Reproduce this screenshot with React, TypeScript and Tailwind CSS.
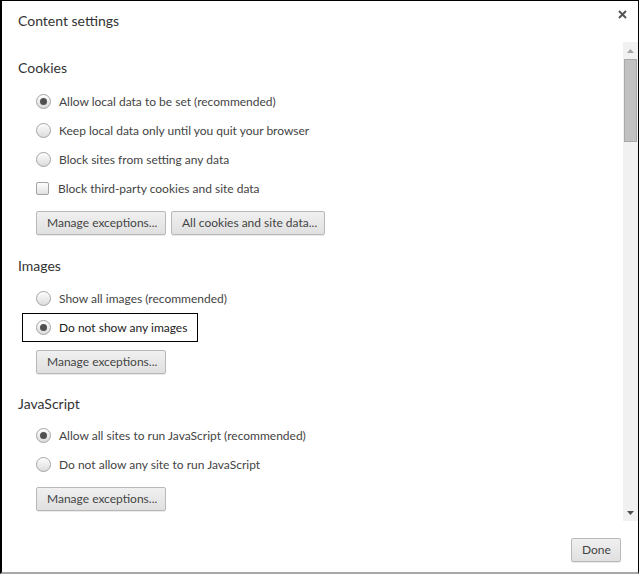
const font = "font-['Lato','Noto_Sans',sans-serif]";

function Radio({ checked }: { checked?: boolean }) {
  return (
    <span className="flex size-[15px] shrink-0 items-center justify-center rounded-full border border-[#a3a3a3] bg-gradient-to-b from-[#fdfdfd] to-[#dcdcdc] shadow-[inset_0_1px_0_#fff]">
      {checked && <span className="size-[7px] rounded-full bg-[#505050]" />}
    </span>
  );
}

function Checkbox() {
  return (
    <span className="size-[13px] shrink-0 rounded-[2px] border border-[#a3a3a3] bg-gradient-to-b from-[#fdfdfd] to-[#e2e2e2]" />
  );
}

function Option({
  label,
  checked,
  kind = "radio",
  focused,
}: {
  label: string;
  checked?: boolean;
  kind?: "radio" | "checkbox";
  focused?: boolean;
}) {
  if (focused) {
    return (
      <div className="flex h-[29px]">
        <div className="ml-[4px] flex w-[176px] items-center gap-[8px] border border-black pl-[13px] text-[12px] whitespace-nowrap text-[#222]">
          <Radio checked={checked} />
          <span>{label}</span>
        </div>
      </div>
    );
  }
  return (
    <div className="flex h-[29px] items-center gap-[8px] pl-[18px] text-[12px] whitespace-nowrap text-[#444]">
      {kind === "radio" ? <Radio checked={checked} /> : <Checkbox />}
      <span className={kind === "checkbox" ? "ml-[1px]" : ""}>{label}</span>
    </div>
  );
}

function Button({ children, className = "" }: { children: React.ReactNode; className?: string }) {
  return (
    <button
      className={`h-[24px] rounded-[2px] border border-[#b8b8b8] bg-gradient-to-b from-[#f0f0f0] to-[#e0e0e0] px-[10px] text-[12px] whitespace-nowrap text-[#444] shadow-[0_1px_0_rgba(0,0,0,0.08)] ${className}`}
    >
      {children}
    </button>
  );
}

function Heading({ children, className = "" }: { children: React.ReactNode; className?: string }) {
  return <h2 className={`h-[20px] text-[14px] leading-[20px] text-[#333] ${className}`}>{children}</h2>;
}

export default function App() {
  return (
    <div className={`h-[574px] w-[639px] border-t border-r border-l-2 border-b-2 border-t-black border-r-black border-l-black border-b-[#a8a8a8] bg-white ${font}`}>
      {/* header */}
      <div className="flex h-[41px] items-start justify-between">
        <h1 className="pl-[16px] pt-[10px] text-[14px] leading-[20px] text-[#333]">Content settings</h1>
        <svg width="9" height="9" viewBox="0 0 9 9" className="mr-[11px] mt-[9px]">
          <path d="M1 1L8 8M8 1L1 8" stroke="#555" strokeWidth="2" />
        </svg>
      </div>

      {/* scrolling body */}
      <div className="flex h-[479px]">
        <div className="flex-1 overflow-hidden pl-[16px]">
          <Heading className="mt-[16px]">Cookies</Heading>
          <div className="mt-[9px]">
            <Option label="Allow local data to be set (recommended)" checked />
            <Option label="Keep local data only until you quit your browser" />
            <Option label="Block sites from setting any data" />
            <Option label="Block third-party cookies and site data" kind="checkbox" />
          </div>
          <div className="mt-[8px] flex gap-[5px] pl-[18px]">
            <Button className="w-[130px]">Manage exceptions...</Button>
            <Button className="w-[154px]">All cookies and site data...</Button>
          </div>

          <Heading className="mt-[21px]">Images</Heading>
          <div className="mt-[8px]">
            <Option label="Show all images (recommended)" />
            <Option label="Do not show any images" checked focused />
          </div>
          <div className="mt-[8px] flex pl-[18px]">
            <Button className="w-[130px]">Manage exceptions...</Button>
          </div>

          <Heading className="mt-[20px]">JavaScript</Heading>
          <div className="mt-[7px]">
            <Option label="Allow all sites to run JavaScript (recommended)" checked />
            <Option label="Do not allow any site to run JavaScript" />
          </div>
          <div className="mt-[8px] flex pl-[18px]">
            <Button className="w-[130px]">Manage exceptions...</Button>
          </div>
        </div>

        {/* scrollbar */}
        <div className="flex w-[15px] flex-col bg-[#f1f1f1]">
          <div className="flex h-[17px] items-center justify-center">
            <svg width="7" height="4" viewBox="0 0 7 4">
              <path d="M0 4L3.5 0L7 4Z" fill="#a3a3a3" />
            </svg>
          </div>
          <div className="mx-[1px] h-[83px] border border-[#a9a9a9] bg-[#c1c1c1]" />
          <div className="flex-1" />
          <div className="flex h-[17px] items-center justify-center">
            <svg width="7" height="4" viewBox="0 0 7 4">
              <path d="M0 0L3.5 4L7 0Z" fill="#505050" />
            </svg>
          </div>
        </div>
      </div>

      {/* footer */}
      <div className="flex justify-end pr-[17px] pt-[17px]">
        <Button className="w-[50px] px-0">Done</Button>
      </div>
    </div>
  );
}
